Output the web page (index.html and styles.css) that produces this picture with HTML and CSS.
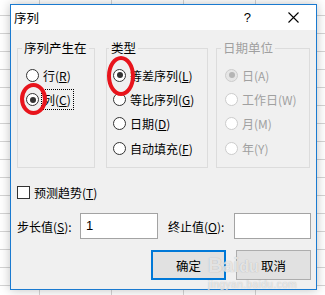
FILE: index.html
```html
<!DOCTYPE html>
<html lang="zh-CN">
    <head>
        <meta charset="UTF-8">
        <title>序列</title>
        <link rel="stylesheet" href="styles.css">
    </head>
    <body>
        <div class="dialog">
            <div class="titlebar">
                <span class="title">序列</span>
                <span class="help">?</span>
                <span class="close">
                    <svg width="11" height="11" viewBox="0 0 11 11">
                        <path d="M0.5 0.5 L10.5 10.5 M10.5 0.5 L0.5 10.5" stroke="#000" stroke-width="1.1" fill="none"/>
                    </svg>
                </span>
            </div>

            <div class="content">
                <div class="groups">
                    <fieldset class="group group-rowcol">
                        <legend>序列产生在</legend>
                        <div class="opt"><span class="radio"></span><span>行(<u>R</u>)</span></div>
                        <div class="opt"><span class="radio checked"></span><span class="focus">列(<u>C</u>)</span></div>
                    </fieldset>

                    <fieldset class="group group-type">
                        <legend>类型</legend>
                        <div class="opt"><span class="radio checked"></span><span>等差序列(<u>L</u>)</span></div>
                        <div class="opt"><span class="radio"></span><span>等比序列(<u>G</u>)</span></div>
                        <div class="opt"><span class="radio"></span><span>日期(<u>D</u>)</span></div>
                        <div class="opt"><span class="radio"></span><span>自动填充(<u>F</u>)</span></div>
                    </fieldset>

                    <fieldset class="group group-date disabled">
                        <legend>日期单位</legend>
                        <div class="opt"><span class="radio checked"></span><span>日(A)</span></div>
                        <div class="opt"><span class="radio"></span><span>工作日(W)</span></div>
                        <div class="opt"><span class="radio"></span><span>月(M)</span></div>
                        <div class="opt"><span class="radio"></span><span>年(Y)</span></div>
                    </fieldset>
                </div>

                <div class="check-row">
                    <span class="checkbox"></span>
                    <span>预测趋势(<u>T</u>)</span>
                </div>

                <div class="value-row">
                    <span class="value-label">步长值(<u>S</u>):</span>
                    <div class="field field-step">1</div>
                    <span class="value-label label-stop">终止值(<u>O</u>):</span>
                    <div class="field field-stop"></div>
                </div>

                <div class="buttons">
                    <button class="btn primary">确定</button>
                    <button class="btn">取消</button>
                </div>
            </div>

            <!-- red hand-drawn marks over the dialog -->
            <span class="mark mark-rowcol"></span>
            <span class="mark mark-type"></span>

            <div class="watermark">
                <p class="wm-logo">Bai<span class="wm-du">du</span></p>
                <p class="wm-url">jingyan.baidu.com</p>
            </div>
        </div>
    </body>
</html>
```

FILE: styles.css
```css
body {
    margin: 0;
    width: 325px;
    height: 295px;
    overflow: hidden;
    background-color: #fff;
    background-image:
        linear-gradient(to right, #d4d4d4 1px, transparent 1px),
        linear-gradient(to bottom, #d4d4d4 1px, transparent 1px);
    background-size: 72px 18px;
    background-position: 39px 15px;
    font-family: "Noto Sans CJK SC", sans-serif;
    font-size: 12px;
    color: #000;
}
p {
    margin: 0;
}
.dialog {
    position: relative;
    margin: 4px 0 0 10px;
    width: 305px;
    height: 284px;
    border: 1px solid #1a7ad0;
    background-color: #f0f0f0;
    box-shadow: 0px 0px 10px rgba(0,0,0,0.25);
}
.titlebar {
    display: flex;
    align-items: center;
    height: 25px;
    background-color: #fff;
    padding-left: 3px;
}
.title {
    font-size: 12.5px;
    line-height: 16px;
}
.help {
    margin-left: auto;
    font-family: "Liberation Sans", sans-serif;
    font-size: 13px;
}
.close {
    display: flex;
    margin-left: 37px;
    margin-right: 17px;
}
.content {
    padding: 10px 0 0 6px;
}
.groups {
    display: flex;
    align-items: flex-start;
}
.group {
    margin: 0;
    padding: 7px 0 0 8px;
    border: 1px solid #dcdcdc;
    box-sizing: border-box;
    height: 128px;
    min-width: 0;
}
.group legend {
    margin-left: -4px;
    padding: 0 2px;
    line-height: 16px;
    font-size: 12.5px;
    white-space: nowrap;
}
.group-rowcol {
    width: 78px;
}
.group-type {
    width: 102px;
    margin-left: 11px;
    padding-left: 6px;
}
.group-date {
    width: 94px;
    margin-left: 8px;
}
.opt {
    display: flex;
    align-items: center;
    gap: 4px;
    height: 24.4px;
    white-space: nowrap;
}
.radio {
    position: relative;
    flex: none;
    width: 13px;
    height: 13px;
    border: 1px solid #333;
    border-radius: 50%;
    background-color: #fff;
    box-sizing: border-box;
}
.radio.checked::after {
    content: "";
    position: absolute;
    left: 2.5px;
    top: 2.5px;
    width: 6px;
    height: 6px;
    border-radius: 50%;
    background-color: #333;
}
.focus {
    outline: 1px dotted #000;
    outline-offset: 1px;
    padding-right: 1px;
}
.disabled legend,
.disabled .opt {
    color: #a0a0a0;
}
.disabled .radio {
    border-color: #cccccc;
}
.disabled .radio.checked {
    background-color: #e6e6e6;
}
.disabled .radio.checked::after {
    background-color: #b5b5b5;
}
.check-row {
    display: flex;
    align-items: center;
    gap: 4px;
    height: 20px;
    margin-top: 14px;
}
.checkbox {
    width: 13px;
    height: 13px;
    border: 1px solid #333;
    background-color: #fff;
    box-sizing: border-box;
}
.value-row {
    display: flex;
    align-items: center;
    margin-top: 11px;
    height: 26px;
}
.value-label {
    width: 63px;
}
.label-stop {
    width: 66px;
    margin-left: 10px;
}
.field {
    box-sizing: border-box;
    height: 26px;
    border: 1px solid #a3a3a3;
    background-color: #fff;
    padding: 3px 0 0 5px;
    line-height: 18px;
    font-family: "Liberation Sans", sans-serif;
    font-size: 13px;
}
.field-step {
    width: 78px;
}
.field-stop {
    width: 77px;
}
.buttons {
    display: flex;
    justify-content: flex-end;
    gap: 10px;
    margin-top: 11px;
    padding-right: 5px;
}
.btn {
    width: 75px;
    height: 30px;
    border: 1px solid #adadad;
    background-color: #e1e1e1;
    font-family: "Noto Sans CJK SC", sans-serif;
    font-size: 12.5px;
    color: #000;
    padding: 0;
}
.btn.primary {
    border: 2px solid #0078d7;
}
.mark {
    position: absolute;
    border: 4px solid #e8141c;
    border-radius: 50%;
    box-sizing: border-box;
}
.mark-rowcol {
    left: 9px;
    top: 78px;
    width: 27px;
    height: 32px;
}
.mark-type {
    left: 96px;
    top: 51px;
    width: 28px;
    height: 40px;
}
.watermark {
    position: absolute;
    left: 197px;
    top: 248px;
    color: rgba(255,255,255,0.7);
    text-shadow: 0 0 1px rgba(120,120,120,0.6);
    font-family: "Liberation Sans", sans-serif;
    pointer-events: none;
}
.wm-logo {
    font-size: 20px;
    font-weight: bold;
    line-height: 24px;
}
.wm-du {
    font-size: 16px;
}
.wm-url {
    font-size: 10px;
    line-height: 12px;
    letter-spacing: 0.5px;
}
```
